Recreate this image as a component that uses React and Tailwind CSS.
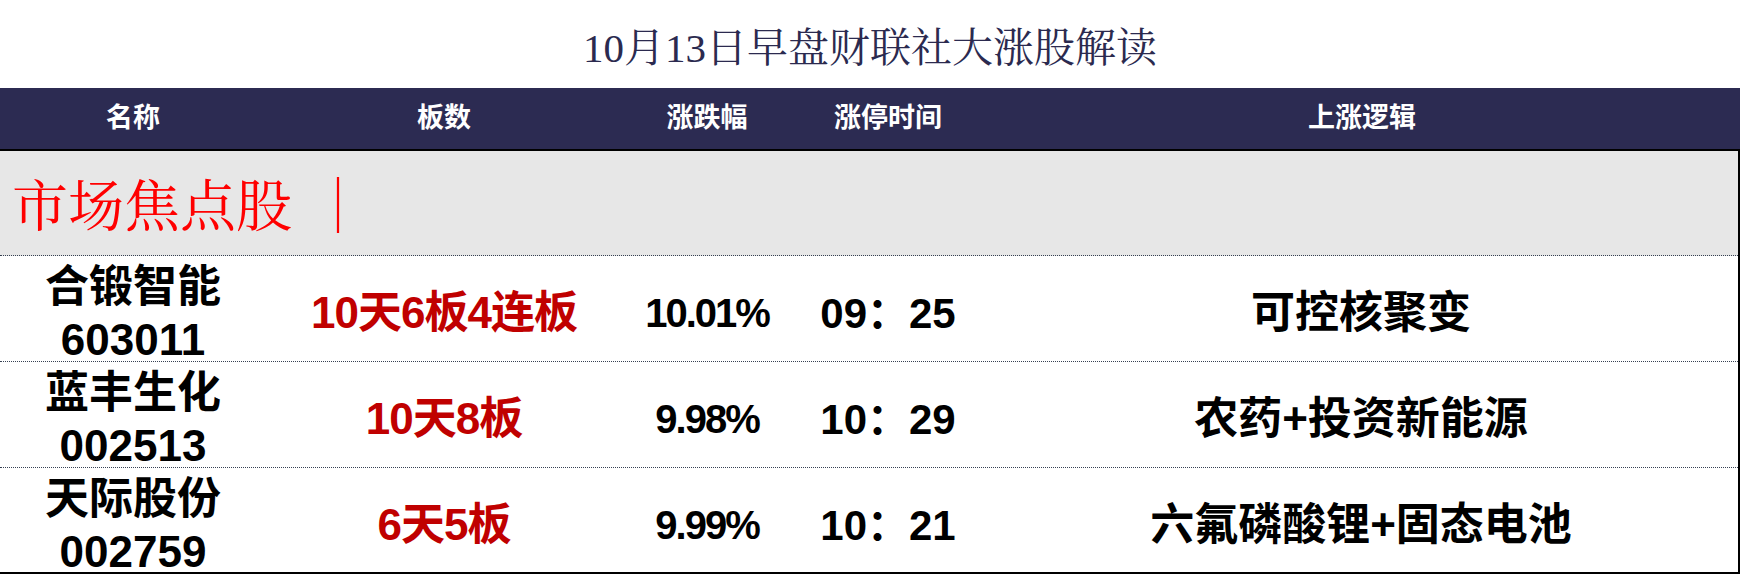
const rows = [
  { name: '合锻智能', code: '603011', boards: '10天6板4连板', pct: '10.01%', time: '09：25', logic: '可控核聚变' },
  { name: '蓝丰生化', code: '002513', boards: '10天8板', pct: '9.98%', time: '10：29', logic: '农药+投资新能源' },
  { name: '天际股份', code: '002759', boards: '6天5板', pct: '9.99%', time: '10：21', logic: '六氟磷酸锂+固态电池' },
];

const sans = { fontFamily: '"Liberation Sans", "Noto Sans CJK SC", sans-serif' };
const serif = { fontFamily: '"Liberation Serif", "Noto Serif CJK SC", "Noto Sans CJK SC", serif' };

const cols = 'grid grid-cols-[266px_356px_170px_192px_1fr]';

export default function App() {
  return (
    <div className="w-[1740px] h-[576px] bg-white overflow-hidden" style={sans}>
      {/* 标题 */}
      <div className="h-[88px] flex items-center justify-center pt-2">
        <h1 className="text-[41px] leading-none text-[#2b2a4f]" style={serif}>
          10月13日早盘财联社大涨股解读
        </h1>
      </div>

      {/* 表头 */}
      <div className={`${cols} h-[63px] bg-[#2c2b52] text-white text-[27px] font-bold items-center text-center border-b-2 border-black`}>
        <div>名称</div>
        <div>板数</div>
        <div>涨跌幅</div>
        <div>涨停时间</div>
        <div>上涨逻辑</div>
      </div>

      <div className="border-r-2 border-black">
        {/* 分组 */}
        <div className="h-[105px] bg-[#e7e7e7] flex items-center pl-3 pt-2 border-b border-dotted border-gray-700">
          <span className="text-[56px] leading-none text-[#ff0000]" style={serif}>
            市场焦点股 <span className="ml-1">｜</span>
          </span>
        </div>

        {rows.map((r, i) => (
          <div
            key={r.code}
            className={`${cols} h-[106px] items-center text-center font-bold ${
              i === rows.length - 1 ? 'border-b-2 border-solid border-black' : 'border-b border-dotted border-gray-700'
            }`}
          >
            <div className="flex flex-col pt-1 text-black text-[44px] leading-[53px]">
              <span>{r.name}</span>
              <span>{r.code}</span>
            </div>
            <div className="pt-1 text-[44px] text-[#c00000] tracking-[-1px]">{r.boards}</div>
            <div className="pt-1 text-[40px] text-black tracking-[-2px]">{r.pct}</div>
            <div className="pt-1 text-[42px] text-black">{r.time}</div>
            <div className="pt-1 text-[44px] text-black">{r.logic}</div>
          </div>
        ))}
      </div>
    </div>
  );
}
